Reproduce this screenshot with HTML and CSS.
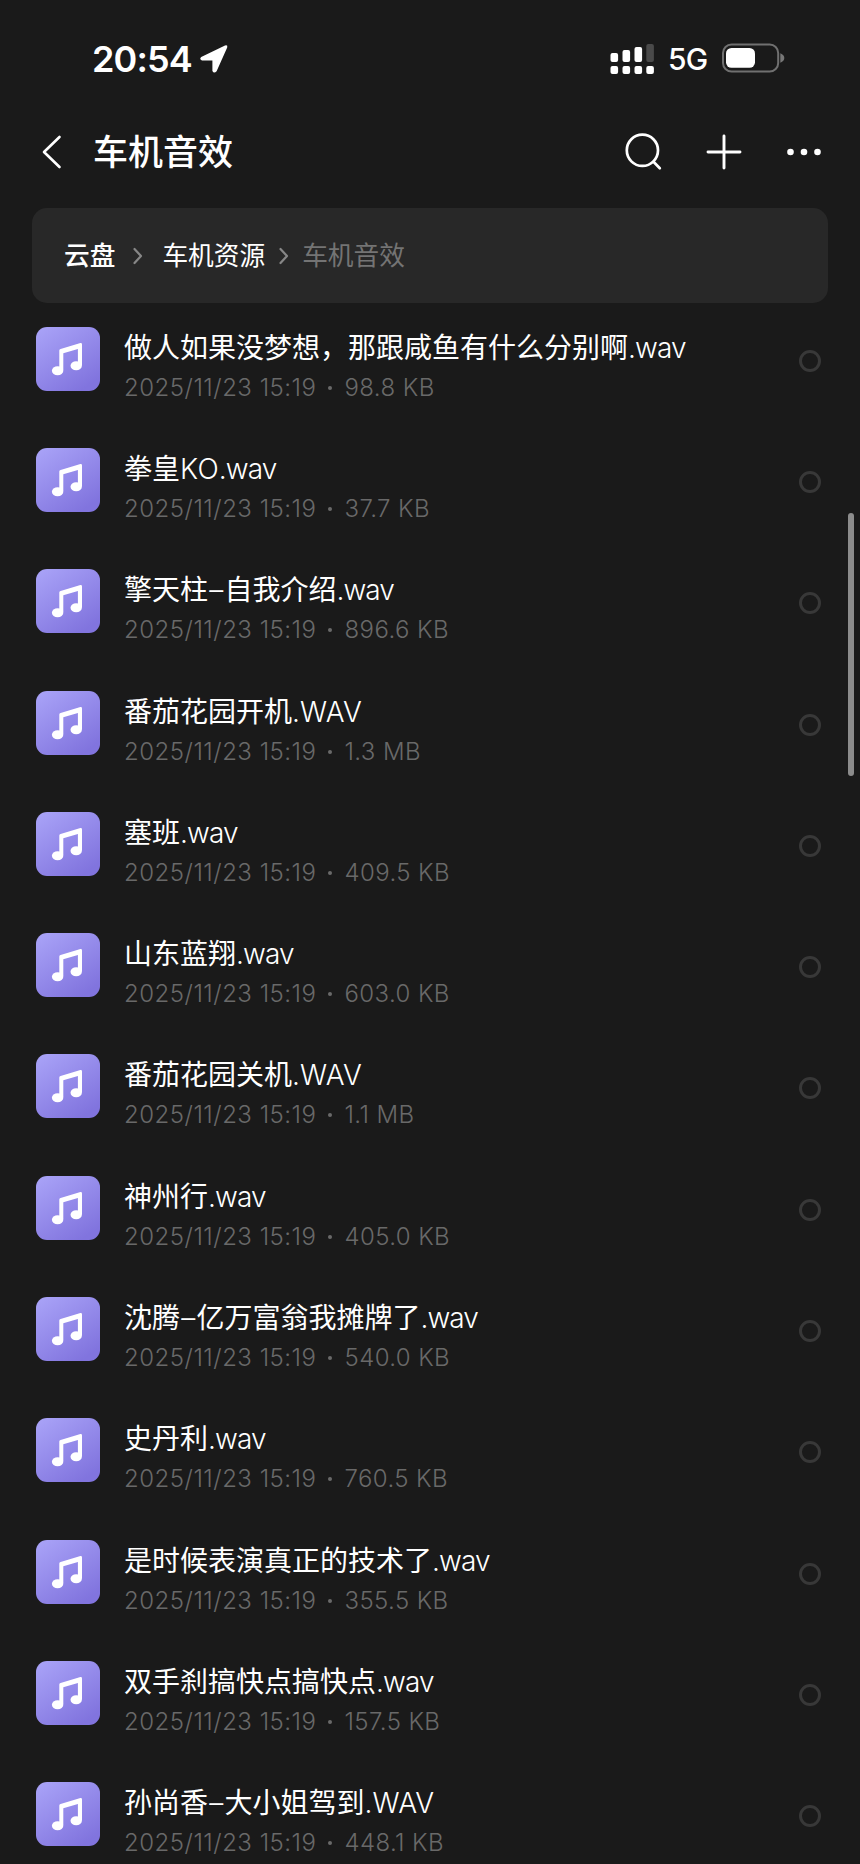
FILE: index.html
```html
<!DOCTYPE html>
<html lang="zh-CN">
<head>
<meta charset="utf-8">
<title>车机音效</title>
<link rel="stylesheet" href="styles.css">
</head>
<body>
<svg class="defs" width="0" height="0" aria-hidden="true">
  <defs>
    <linearGradient id="tile" x1="0" y1="0" x2="0.7" y2="1">
      <stop offset="0" stop-color="#aaa4f8"/><stop offset="1" stop-color="#8174de"/>
    </linearGradient>
    <symbol id="music" viewBox="0 0 64 64">
      <rect width="64" height="64" rx="11" fill="url(#tile)"/>
      <path d="M23.3 43V23.6Q23.3 22.3 24.6 21.9L44.4 16.1Q46 15.8 46 17.4V38.5H41.9V22L27.3 26.2V43Z" fill="#fff"/>
      <ellipse cx="21.6" cy="43.8" rx="5.7" ry="4.5" fill="#fff"/>
      <ellipse cx="40.2" cy="38.7" rx="5.7" ry="4.5" fill="#fff"/>
    </symbol>
    <symbol id="chev" viewBox="0 0 10 18"><path d="M1.5 2L8 9L1.5 16" fill="none" stroke="#878787" stroke-width="2.2" stroke-linecap="round" stroke-linejoin="round"/></symbol>
  </defs>
</svg>
<div class="screen">
  <div class="status">
    <span class="time">20:54</span>
    <svg class="loc" width="30" height="30" viewBox="0 0 30 30"><path d="M2.2 13L26 1.4Q29 .4 28.2 3.6L17.6 27.2Q15 30 13.4 27V16.4H3Q0 15.4 2.2 13Z" fill="#fff"/></svg>
    <svg class="signal" width="44" height="32" viewBox="0 0 44 32" fill="#fff">
      <rect x=".5" y="11" width="7.6" height="9" rx="2"/><rect x="12.5" y="8" width="7.6" height="12" rx="2"/><rect x="24.5" y="5" width="7.6" height="15" rx="2"/><rect x="36.3" y="2" width="7.6" height="18" rx="2" fill="#4a4a4a"/>
      <rect x=".5" y="24" width="7.6" height="8" rx="2"/><rect x="12.5" y="24" width="7.6" height="8" rx="2"/><rect x="24.5" y="24" width="7.6" height="8" rx="2"/><rect x="36.3" y="24" width="7.6" height="8" rx="2"/>
    </svg>
    <span class="net">5G</span>
    <svg class="battery" width="63" height="30" viewBox="0 0 63 30"><rect x="1" y="1.5" width="55.2" height="27" rx="8.5" fill="none" stroke="#707070" stroke-width="2"/><rect x="4" y="5" width="29" height="19.8" rx="5.5" fill="#fff"/><path d="M58.3 10.3Q62.3 12 62.3 15T58.3 19.7Z" fill="#777"/></svg>
  </div>
  <header class="bar">
    <svg class="back" width="20" height="34" viewBox="0 0 20 34"><path d="M17.5 2L2 17L17.5 32" fill="none" stroke="#fff" stroke-width="2.6" stroke-linecap="round" stroke-linejoin="round"/></svg>
    <h1 class="title">车机音效</h1>
    <svg class="search" width="38" height="38" viewBox="0 0 38 38"><g fill="none" stroke="#fff" stroke-width="2.7" stroke-linecap="round"><circle cx="17.4" cy="17.3" r="15.6"/><path d="M28.5 28.8L34.8 35.3"/></g></svg>
    <svg class="plus" width="36" height="36" viewBox="0 0 36 36"><path d="M18 2V34M2 18H34" stroke="#fff" stroke-width="2.9" stroke-linecap="round"/></svg>
    <svg class="more" width="36" height="10" viewBox="0 0 36 10" fill="#fff"><circle cx="4.5" cy="5" r="3.3"/><circle cx="18" cy="5" r="3.3"/><circle cx="31.5" cy="5" r="3.3"/></svg>
  </header>
  <nav class="crumbs">
    <span class="root">云盘</span><svg class="c1" width="10" height="18"><use href="#chev"/></svg><span>车机资源</span><svg class="c2" width="10" height="18"><use href="#chev"/></svg><span class="here">车机音效</span>
  </nav>
  <main class="list">
    <div class="row"><svg class="icon"><use href="#music"/></svg><div class="text"><div class="name">做人如果没梦想，那跟咸鱼有什么分别啊<span class="ext">.wav</span></div><div class="meta"><span class="date">2025/11/23 15:19</span><i class="dot"></i><span>98.8 KB</span></div></div><i class="ring"></i></div>
    <div class="row"><svg class="icon"><use href="#music"/></svg><div class="text"><div class="name">拳皇<span class="upper">KO</span><span class="ext">.wav</span></div><div class="meta"><span class="date">2025/11/23 15:19</span><i class="dot"></i><span>37.7 KB</span></div></div><i class="ring"></i></div>
    <div class="row"><svg class="icon"><use href="#music"/></svg><div class="text"><div class="name">擎天柱<span class="dash">–</span>自我介绍<span class="ext">.wav</span></div><div class="meta"><span class="date">2025/11/23 15:19</span><i class="dot"></i><span>896.6 KB</span></div></div><i class="ring"></i></div>
    <div class="row"><svg class="icon"><use href="#music"/></svg><div class="text"><div class="name">番茄花园开机<span class="upper">.WAV</span></div><div class="meta"><span class="date">2025/11/23 15:19</span><i class="dot"></i><span>1.3 MB</span></div></div><i class="ring"></i></div>
    <div class="row"><svg class="icon"><use href="#music"/></svg><div class="text"><div class="name">塞班<span class="ext">.wav</span></div><div class="meta"><span class="date">2025/11/23 15:19</span><i class="dot"></i><span>409.5 KB</span></div></div><i class="ring"></i></div>
    <div class="row"><svg class="icon"><use href="#music"/></svg><div class="text"><div class="name">山东蓝翔<span class="ext">.wav</span></div><div class="meta"><span class="date">2025/11/23 15:19</span><i class="dot"></i><span>603.0 KB</span></div></div><i class="ring"></i></div>
    <div class="row"><svg class="icon"><use href="#music"/></svg><div class="text"><div class="name">番茄花园关机<span class="upper">.WAV</span></div><div class="meta"><span class="date">2025/11/23 15:19</span><i class="dot"></i><span>1.1 MB</span></div></div><i class="ring"></i></div>
    <div class="row"><svg class="icon"><use href="#music"/></svg><div class="text"><div class="name">神州行<span class="ext">.wav</span></div><div class="meta"><span class="date">2025/11/23 15:19</span><i class="dot"></i><span>405.0 KB</span></div></div><i class="ring"></i></div>
    <div class="row"><svg class="icon"><use href="#music"/></svg><div class="text"><div class="name">沈腾<span class="dash">–</span>亿万富翁我摊牌了<span class="ext">.wav</span></div><div class="meta"><span class="date">2025/11/23 15:19</span><i class="dot"></i><span>540.0 KB</span></div></div><i class="ring"></i></div>
    <div class="row"><svg class="icon"><use href="#music"/></svg><div class="text"><div class="name">史丹利<span class="ext">.wav</span></div><div class="meta"><span class="date">2025/11/23 15:19</span><i class="dot"></i><span>760.5 KB</span></div></div><i class="ring"></i></div>
    <div class="row"><svg class="icon"><use href="#music"/></svg><div class="text"><div class="name">是时候表演真正的技术了<span class="ext">.wav</span></div><div class="meta"><span class="date">2025/11/23 15:19</span><i class="dot"></i><span>355.5 KB</span></div></div><i class="ring"></i></div>
    <div class="row"><svg class="icon"><use href="#music"/></svg><div class="text"><div class="name">双手刹搞快点搞快点<span class="ext">.wav</span></div><div class="meta"><span class="date">2025/11/23 15:19</span><i class="dot"></i><span>157.5 KB</span></div></div><i class="ring"></i></div>
    <div class="row"><svg class="icon"><use href="#music"/></svg><div class="text"><div class="name">孙尚香<span class="dash">–</span>大小姐驾到<span class="upper">.WAV</span></div><div class="meta"><span class="date">2025/11/23 15:19</span><i class="dot"></i><span>448.1 KB</span></div></div><i class="ring"></i></div>
  </main>
  <div class="scrollbar"></div>
</div>
</body>
</html>
```
FILE: styles.css
```css
* { box-sizing: border-box; }
body { margin: 0; background: #1a1a1a; }
.defs { position: absolute; }
svg, .ring, .dot { flex: none; display: block; }
.screen {
  position: relative;
  width: 860px;
  height: 1864px;
  overflow: hidden;
  background: #1a1a1a;
  color: #fff;
  font-family: Inter, "Noto Sans CJK SC", sans-serif;
  white-space: nowrap;
}
.status { display: flex; align-items: center; height: 118px; padding-left: 92px; }
.time { width: 107px; font-size: 36px; font-weight: 600; line-height: 44px; letter-spacing: -0.9px; }
.loc { margin-right: 381px; }
.signal { margin-right: 15px; margin-top: -2px; }
.net { width: 38px; margin-right: 16px; font-size: 30px; font-weight: 500; line-height: 40px; letter-spacing: -0.8px; margin-left: -1px; }
.battery { margin-top: -2px; }
.bar { display: flex; align-items: center; height: 68px; padding-left: 42px; }
.title { width: 532px; margin: -1px 0 0 31px; font-size: 35px; font-weight: 500; line-height: 50px; }
.plus { margin-left: 42.5px; }
.more { margin-left: 44.5px; }
.crumbs {
  display: flex;
  align-items: center;
  height: 95px;
  margin: 21.5px 32px 0;
  padding: 2px 0 0 32px;
  border-radius: 15px;
  background: #282828;
  font-size: 25.7px;
  line-height: 40px;
}
.root { font-weight: 500; }
.c1 { margin: 0 19px 0 18px; }
.c2 { margin: 0 13.5px; }
.here { color: #747474; }
.list { display: flex; flex-direction: column; gap: 57.3px; padding: 24.2px 39px 0 36px; }
.row { display: flex; height: 64px; flex: none; }
.icon { width: 64px; height: 64px; }
.text { flex: 1; margin-left: 24px; padding-top: 1px; }
.name { font-size: 28px; line-height: 40px; }
.ext { font-weight: 300; letter-spacing: -0.9px; }
.upper { font-weight: 300; letter-spacing: 0.2px; }
.dash { padding: 0 1.2px; font-weight: 300; }
.meta { display: flex; align-items: center; color: #696969; font-size: 24px; font-weight: 300; line-height: 40px; letter-spacing: 0.4px; }
.date { width: 190.5px; letter-spacing: 0.5px; }
.dot { width: 4px; height: 4px; margin: 0 13px 0 13px; border-radius: 50%; background: #696969; }
.ring { width: 22px; height: 22px; margin-top: 23px; border: 3px solid #383838; border-radius: 50%; }
.scrollbar { position: absolute; left: 848px; top: 513px; width: 6px; height: 263px; border-radius: 3px; background: #8c8c8c; }
```
